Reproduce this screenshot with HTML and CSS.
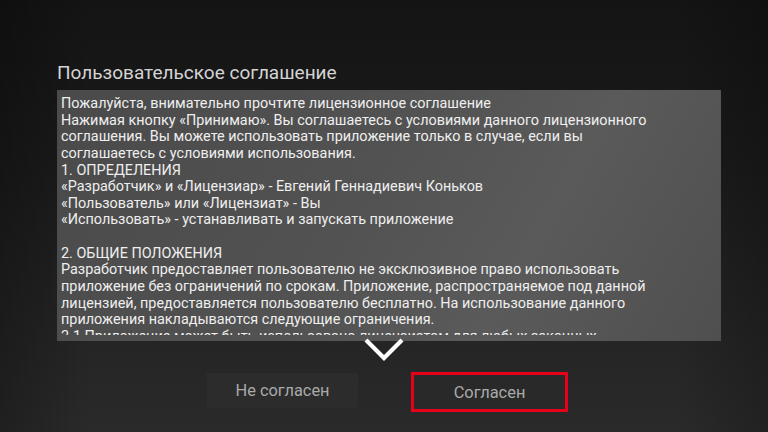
FILE: index.html
```html
<!DOCTYPE html>
<html>
<head>
    <meta charset="utf-8">
    <meta name="viewport" content="width=device-width, initial-scale=1.0">
    <title>Пользовательское соглашение</title>
    <link rel="stylesheet" href="styles.css">
</head>
<body>
    <div class="screen">
        <h1 class="title">Пользовательское соглашение</h1>

        <div class="license">
            <div class="license-text">Пожалуйста, внимательно прочтите лицензионное соглашение<br>
Нажимая кнопку «Принимаю». Вы соглашаетесь с условиями данного лицензионного<br>
соглашения. Вы можете использовать приложение только в случае, если вы<br>
соглашаетесь с условиями использования.<br>
1. ОПРЕДЕЛЕНИЯ<br>
«Разработчик» и «Лицензиар» - Евгений Геннадиевич Коньков<br>
«Пользователь» или «Лицензиат» - Вы<br>
«Использовать» - устанавливать и запускать приложение<br>
<br>
2. ОБЩИЕ ПОЛОЖЕНИЯ<br>
Разработчик предоставляет пользователю не эксклюзивное право использовать<br>
приложение без ограничений по срокам. Приложение, распространяемое под данной<br>
лицензией, предоставляется пользователю бесплатно. На использование данного<br>
приложения накладываются следующие ограничения.<br>
2.1 Приложение может быть использовано лицензиатом для любых законных</div>

            <!-- scroll hint over the bottom edge -->
            <svg class="more" width="44" height="26" viewBox="0 0 44 26">
                <polyline points="4,3 22,21 40,3" fill="none" stroke="#fff" stroke-width="4.2"/>
            </svg>
        </div>

        <div class="actions">
            <button class="btn">Не согласен</button>
            <button class="btn btn-focused">Согласен</button>
        </div>
    </div>
</body>
</html>
```

FILE: styles.css
```css
html, body {
    margin: 0;
    height: 100%;
}

body {
    font-family: Roboto, "Noto Sans", sans-serif;
    background: linear-gradient(180deg, #141414 0%, #1a1a1a 35%, #242424 75%, #2a2a2a 100%);
    overflow: hidden;
}

.screen {
    width: 768px;
    height: 432px;
    box-sizing: border-box;
    padding: 62px 47px 0 57px;
    background: linear-gradient(90deg, rgba(0, 0, 0, 0.25) 0%, rgba(0, 0, 0, 0) 12%, rgba(0, 0, 0, 0) 88%, rgba(0, 0, 0, 0.2) 100%);
}

.title {
    margin: 0 0 7px;
    font-size: 19px;
    font-weight: normal;
    line-height: 21px;
    color: #d4d4d4;
}

.license {
    position: relative;
    height: 251px;
    box-sizing: border-box;
    padding: 6px 4px;
    background: linear-gradient(120deg, #4a4a4a 0%, #525252 45%, #5a5a5a 70%, #4f4f4f 100%);
}

.license-text {
    height: 100%;
    overflow: hidden;
    white-space: nowrap;
    font-size: 14.4px;
    line-height: 16.64px;
    color: #efefef;
}

.more {
    position: absolute;
    left: 305px;
    bottom: -22px;
    display: block;
}

.actions {
    display: flex;
    align-items: flex-start;
    gap: 53px;
    margin-top: 31px;
    padding-left: 150px;
}

.btn {
    width: 151px;
    height: 35px;
    margin-top: 1px;
    padding: 0;
    border: none;
    background-color: #2c2c2c;
    color: #a9a9a9;
    font-family: Roboto, "Noto Sans", sans-serif;
    font-size: 16.4px;
}

.btn-focused {
    width: 157px;
    height: 40px;
    margin-top: 0;
    border: 3px solid #e8001a;
    background-color: #292929;
}
```
